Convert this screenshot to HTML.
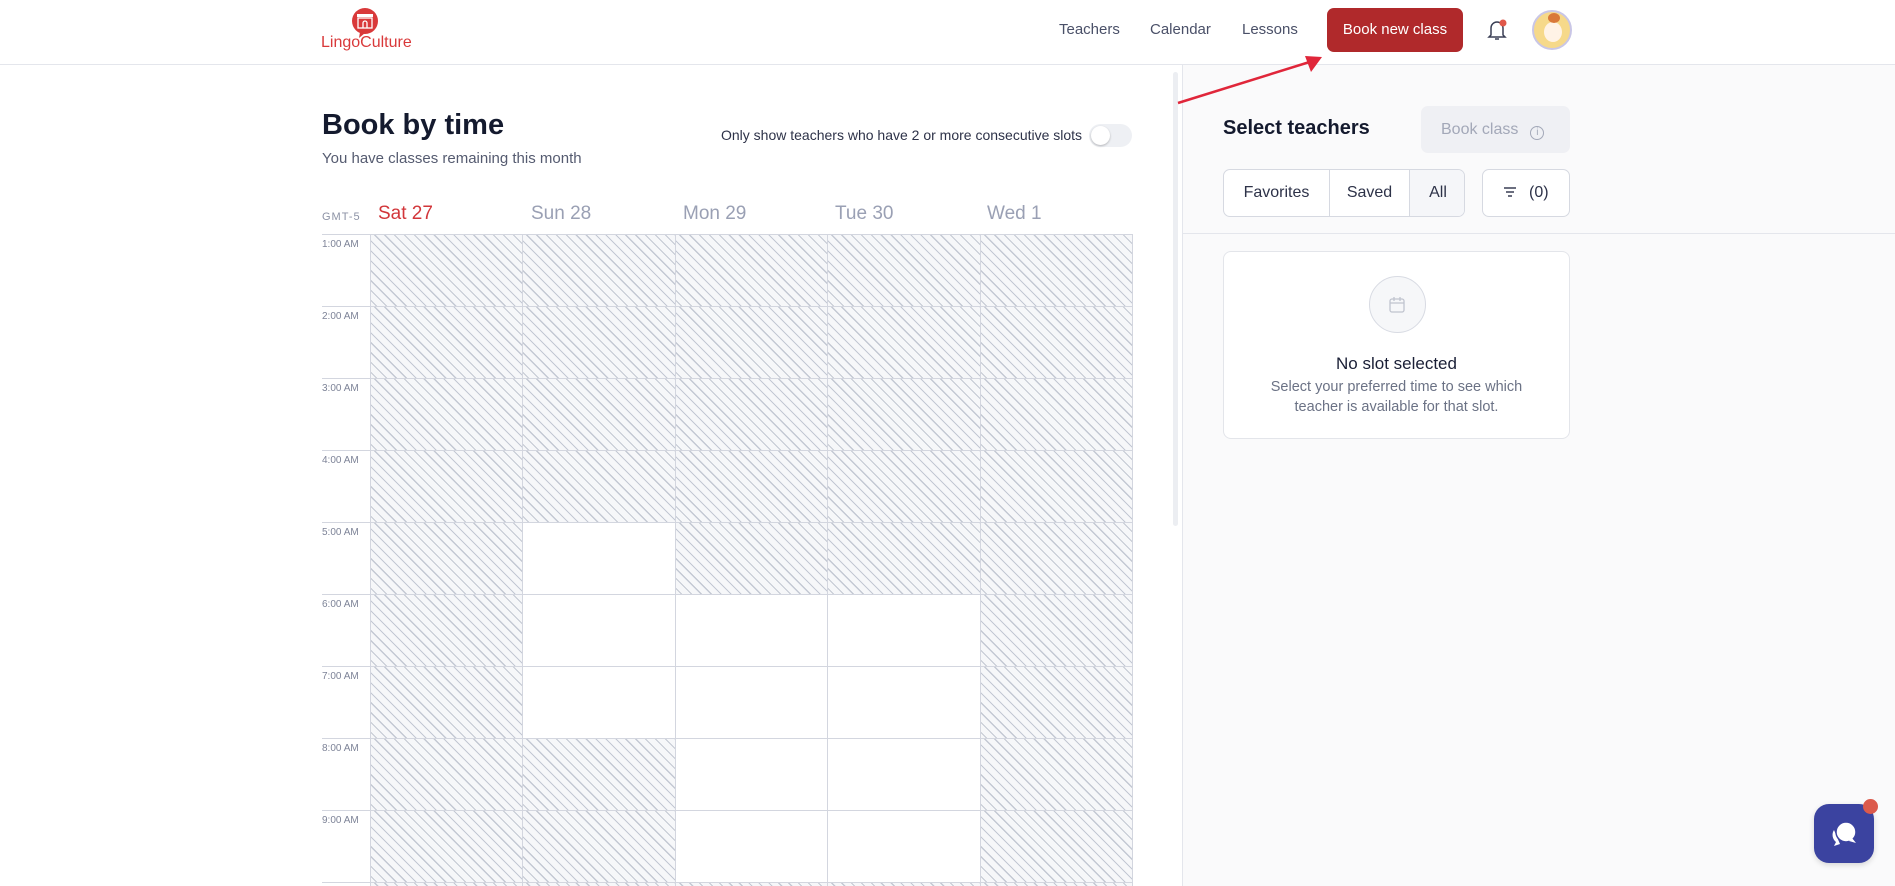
<!DOCTYPE html>
<html style="width:1895px;height:886px;overflow:hidden"><head><meta charset="utf-8"><style>
*{margin:0;padding:0;box-sizing:border-box}
body{width:1895px;height:886px;overflow:hidden;background:#fff;font-family:"Liberation Sans",sans-serif;color:#1a1f36;position:relative}
.a{position:absolute;white-space:nowrap}
.hatch{background:repeating-linear-gradient(45deg,#f6f7f9 0 4px,#c3c8d3 4px 5.2px,#f6f7f9 5.2px 7px)}
.nav{font-size:15px;color:#4a5068;top:21px}
</style></head><body>
<!-- header -->
<div class="a" style="left:0;top:64px;width:1895px;height:1px;background:#e4e6ec"></div>
<svg class="a" style="left:350px;top:8px" width="30" height="30" viewBox="0 0 30 30"><circle cx="15" cy="13" r="13" fill="#d9393a"/><path d="M10 24 L9 30 L15 25Z" fill="#d9393a"/><rect x="7" y="6" width="16" height="3" fill="#fff"/><rect x="8" y="10" width="14" height="10" fill="none" stroke="#fff" stroke-width="1.3"/><path d="M13 20v-5a2 2 0 0 1 4 0v5" fill="none" stroke="#fff" stroke-width="1.3"/></svg>
<div class="a" style="left:321px;top:34px;font-size:16px;color:#d9393a">LingoCulture</div>
<div class="a nav" style="left:1059px">Teachers</div>
<div class="a nav" style="left:1150px">Calendar</div>
<div class="a nav" style="left:1242px">Lessons</div>
<div class="a" style="left:1327px;top:8px;width:136px;height:44px;background:#b0292b;border-radius:7px;color:#fff;font-size:15px;line-height:44px;text-align:center">Book new class</div>
<svg class="a" style="left:1486px;top:18px" width="22" height="24" viewBox="0 0 22 24"><path d="M5 17V10a6 6 0 0 1 12 0v7l2 2H3z" fill="none" stroke="#3a3f55" stroke-width="1.5"/><path d="M9 21h4" stroke="#3a3f55" stroke-width="1.5"/><circle cx="17" cy="5" r="3.5" fill="#e0584a"/></svg>
<div class="a" style="left:1532px;top:10px;width:40px;height:40px;border-radius:50%;background:#f6d98a;border:2px solid #c9c6e6;overflow:hidden"><div style="position:absolute;left:10px;top:10px;width:18px;height:20px;background:#fff3e6;border-radius:50%"></div><div style="position:absolute;left:14px;top:1px;width:12px;height:10px;background:#d9793a;border-radius:50%"></div></div>
<!-- right panel -->
<div class="a" style="left:1182px;top:65px;width:713px;height:821px;background:#fafafb;border-left:1px solid #e4e6ec"></div>
<div class="a" style="left:1173px;top:72px;width:5px;height:454px;background:#eceef2;border-radius:3px"></div>
<!-- arrow -->
<svg class="a" style="left:1170px;top:50px" width="170" height="60"><line x1="8" y1="53" x2="146" y2="10" stroke="#e0263a" stroke-width="2.5"/><path d="M152 7 L135 6 L141 22Z" fill="#e0263a"/></svg>
<!-- left -->
<div class="a" style="left:322px;top:109px;font-size:29px;font-weight:bold;color:#141a2e">Book by time</div>
<div class="a" style="left:322px;top:150px;font-size:15px;color:#555b70">You have classes remaining this month</div>
<div class="a" style="left:721px;top:127px;font-size:14px;color:#2d3248">Only show teachers who have 2 or more consecutive slots</div>
<div class="a" style="left:1089px;top:124px;width:43px;height:23px;border-radius:12px;background:#eef0f4"><div style="position:absolute;left:2px;top:2px;width:19px;height:19px;border-radius:50%;background:#fff;box-shadow:0 1px 2px rgba(0,0,0,.25)"></div></div>
<div class="a" style="left:322px;top:211px;font-size:11px;color:#8c92a5;letter-spacing:1px">GMT-5</div>
<div class="a" style="left:378px;top:203px;font-size:19px;color:#d2363a">Sat 27</div>
<div class="a" style="left:531px;top:203px;font-size:19px;color:#9aa0b4">Sun 28</div>
<div class="a" style="left:683px;top:203px;font-size:19px;color:#9aa0b4">Mon 29</div>
<div class="a" style="left:835px;top:203px;font-size:19px;color:#9aa0b4">Tue 30</div>
<div class="a" style="left:987px;top:203px;font-size:19px;color:#9aa0b4">Wed 1</div>
<div class="a" style="left:0;top:0;width:1182px;height:886px;overflow:hidden" id="grid"></div>
<script>
var g=document.getElementById('grid'),h='';
var white={'4,1':1,'5,1':1,'5,2':1,'5,3':1,'6,1':1,'6,2':1,'6,3':1,'7,2':1,'7,3':1,'8,2':1,'8,3':1};
for(var r=0;r<10;r++){var y=234+r*72;
 h+='<div class="a" style="left:322px;top:'+y+'px;width:810px;height:1px;background:#d3d6df"></div>';
 h+='<div class="a" style="left:322px;top:'+(y+5)+'px;font-size:10px;color:#7d8397">'+(r+1)+':00 AM</div>';
 for(var c=0;c<5;c++){var x=370+c*152.4;
  h+='<div class="a'+(white[r+','+c]?'':' hatch')+'" style="left:'+x+'px;top:'+(y+1)+'px;width:152.4px;height:71px"></div>';}
}
for(var c=0;c<=5;c++)h+='<div class="a" style="left:'+(370+c*152.4)+'px;top:234px;width:1px;height:652px;background:#d3d6df"></div>';
g.innerHTML=h;
</script>
<!-- right content -->
<div class="a" style="left:1223px;top:117px;font-size:20px;font-weight:bold;color:#141a2e">Select teachers</div>
<div class="a" style="left:1421px;top:106px;width:149px;height:47px;background:#eff0f4;border-radius:7px;color:#a3a8b8;font-size:16px;line-height:47px;padding-left:20px">Book class<span style="display:inline-block;margin-left:12px;width:14px;height:14px;border:1.3px solid #a3a8b8;border-radius:50%;font-size:10px;line-height:12px;text-align:center;vertical-align:-1px">i</span></div>
<div class="a" style="left:1223px;top:169px;width:242px;height:48px;border:1px solid #d6d9e1;border-radius:7px;background:#fff;overflow:hidden;font-size:16px;color:#2d3248;line-height:46px">
<div class="a" style="left:0;top:0;width:106px;text-align:center;border-right:1px solid #d6d9e1;height:46px">Favorites</div>
<div class="a" style="left:106px;top:0;width:80px;text-align:center;border-right:1px solid #d6d9e1;height:46px">Saved</div>
<div class="a" style="left:186px;top:0;width:56px;text-align:center;background:#f5f6f9;height:46px">All</div></div>
<div class="a" style="left:1482px;top:169px;width:88px;height:48px;border:1px solid #d6d9e1;border-radius:7px;background:#fff;font-size:16px;color:#2d3248;line-height:46px;padding-left:20px"><svg width="14" height="12" style="vertical-align:-1px;margin-right:12px"><path d="M1 2h12M3 6h8M5 10h4" stroke="#3a3f55" stroke-width="1.5"/></svg>(0)</div>
<div class="a" style="left:1183px;top:233px;width:712px;height:1px;background:#e4e6ec"></div>
<div class="a" style="left:1223px;top:251px;width:347px;height:188px;background:#fff;border:1px solid #e3e5ea;border-radius:8px"></div>
<div class="a" style="left:1369px;top:276px;width:57px;height:57px;border-radius:50%;background:#f6f7f9;border:1px solid #d8dbe3"></div>
<svg class="a" style="left:1388px;top:296px" width="18" height="18" viewBox="0 0 18 18"><rect x="2" y="3" width="14" height="13" rx="2" fill="none" stroke="#c0c4cf" stroke-width="1.3"/><path d="M2 7h14M6 1v4M12 1v4" stroke="#c0c4cf" stroke-width="1.3"/></svg>
<div class="a" style="left:1223px;width:347px;top:354px;text-align:center;font-size:17px;color:#1a1f36">No slot selected</div>
<div class="a" style="left:1223px;width:347px;top:377px;text-align:center;font-size:14.5px;color:#6b7285;line-height:20px;white-space:normal">Select your preferred time to see which<br>teacher is available for that slot.</div>
<!-- chat -->
<div class="a" style="left:1814px;top:804px;width:60px;height:59px;background:#3b43a0;border-radius:15px;box-shadow:0 2px 6px rgba(0,0,0,.15)"></div>
<svg class="a" style="left:1828px;top:818px" width="32" height="32" viewBox="0 0 32 32"><path d="M6 12a9 9 0 0 0 2 12l-2 4 6-2" fill="#fff"/><circle cx="18" cy="14" r="10" fill="#fff" stroke="#3b43a0" stroke-width="1.5"/><path d="M24 20l4 5-7-2z" fill="#fff"/></svg>
<div class="a" style="left:1863px;top:799px;width:15px;height:15px;border-radius:50%;background:#dc5a4c"></div>
</body></html>
